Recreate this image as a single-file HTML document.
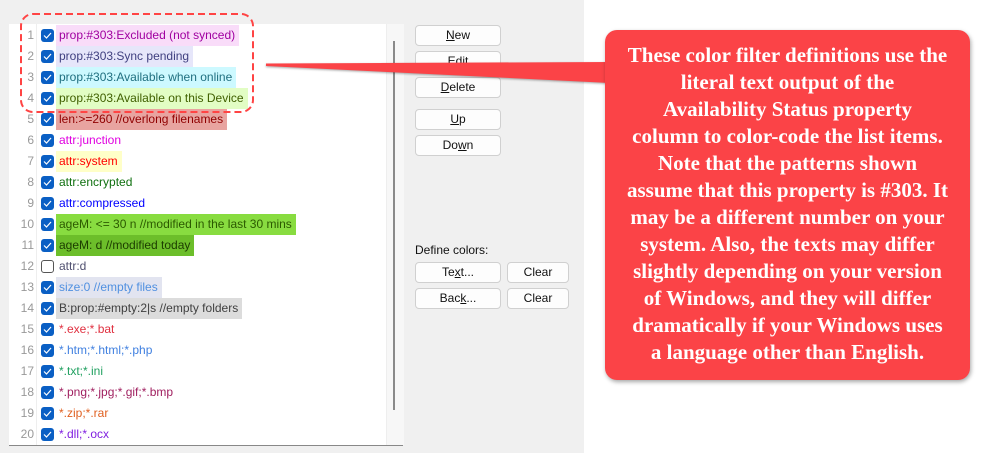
<!DOCTYPE html>
<html><head><meta charset="utf-8"><style>
body{margin:0;width:990px;height:453px;background:#fff;position:relative;overflow:hidden;font-family:"Liberation Sans",sans-serif}
.panel{position:absolute;left:0;top:0;width:584px;height:453px;background:#f0f0f0}
.list{position:absolute;left:9px;top:24px;width:394px;height:421px;background:#fff;border-bottom:1px solid #888}
.strip{position:absolute;left:386px;top:24px;width:17px;height:421px;background:#f7f7f7;border-left:1px solid #eee}
.thumb{position:absolute;left:393px;top:41px;width:2px;height:369px;background:#8a8a8a}
.sep{position:absolute;left:36px;top:24px;width:1px;height:421px;background:#eee}
.row{position:absolute;left:0;height:21px;width:380px}
.num{position:absolute;left:10px;width:24px;text-align:right;top:3px;font-size:12px;color:#999}
.cb{position:absolute;left:41px;top:4px;width:13px;height:13px;border-radius:3px;background:#0a5fc4}
.cb svg{position:absolute;left:2px;top:2px}
.cb.off{background:#fff;border:1px solid #555;width:11px;height:11px}
.t{position:absolute;left:56px;top:0;height:21px;line-height:21px;padding:0 4px 0 3px;font-size:12px;white-space:nowrap}
.btn{position:absolute;height:19px;background:#fdfdfd;border:1px solid #d0d0d0;border-radius:4px;font-size:12px;text-align:center;line-height:19px;color:#111}
.callout{position:absolute;left:605px;top:30px;width:365px;height:350px;background:#fb4347;border-radius:12px;box-shadow:1px 2px 4px rgba(0,0,0,.35);color:#fff;font-family:"Liberation Serif",serif;font-size:21px;font-weight:bold;line-height:27px;text-align:center;padding-top:12px;box-sizing:border-box;white-space:nowrap}
</style></head><body>
<div class="panel"></div>
<div class="list"></div>
<div class="strip"></div>
<div class="thumb"></div>
<div class="sep"></div>
<div style="position:absolute;left:0;top:0">
<div class="row" style="top:25px"><span class="num">1</span><span class="cb"><svg width="9" height="9"><path d="M1 4.5l2.5 2.5 4.5-5" stroke="#fff" stroke-width="1.2" fill="none"/></svg></span><span class="t" style="background:#f9dcf9;color:#a000a0">prop:#303:Excluded (not synced)</span></div>
<div class="row" style="top:46px"><span class="num">2</span><span class="cb"><svg width="9" height="9"><path d="M1 4.5l2.5 2.5 4.5-5" stroke="#fff" stroke-width="1.2" fill="none"/></svg></span><span class="t" style="background:#e6e6fa;color:#404080">prop:#303:Sync pending</span></div>
<div class="row" style="top:67px"><span class="num">3</span><span class="cb"><svg width="9" height="9"><path d="M1 4.5l2.5 2.5 4.5-5" stroke="#fff" stroke-width="1.2" fill="none"/></svg></span><span class="t" style="background:#cdf9ff;color:#207080">prop:#303:Available when online</span></div>
<div class="row" style="top:88px"><span class="num">4</span><span class="cb"><svg width="9" height="9"><path d="M1 4.5l2.5 2.5 4.5-5" stroke="#fff" stroke-width="1.2" fill="none"/></svg></span><span class="t" style="background:#e2fdc4;color:#406000">prop:#303:Available on this Device</span></div>
<div class="row" style="top:109px"><span class="num">5</span><span class="cb"><svg width="9" height="9"><path d="M1 4.5l2.5 2.5 4.5-5" stroke="#fff" stroke-width="1.2" fill="none"/></svg></span><span class="t" style="background:#e8a4a0;color:#900000">len:&gt;=260 //overlong filenames</span></div>
<div class="row" style="top:130px"><span class="num">6</span><span class="cb"><svg width="9" height="9"><path d="M1 4.5l2.5 2.5 4.5-5" stroke="#fff" stroke-width="1.2" fill="none"/></svg></span><span class="t" style="color:#e000e0">attr:junction</span></div>
<div class="row" style="top:151px"><span class="num">7</span><span class="cb"><svg width="9" height="9"><path d="M1 4.5l2.5 2.5 4.5-5" stroke="#fff" stroke-width="1.2" fill="none"/></svg></span><span class="t" style="background:#ffffc8;color:#ff0000">attr:system</span></div>
<div class="row" style="top:172px"><span class="num">8</span><span class="cb"><svg width="9" height="9"><path d="M1 4.5l2.5 2.5 4.5-5" stroke="#fff" stroke-width="1.2" fill="none"/></svg></span><span class="t" style="color:#107010">attr:encrypted</span></div>
<div class="row" style="top:193px"><span class="num">9</span><span class="cb"><svg width="9" height="9"><path d="M1 4.5l2.5 2.5 4.5-5" stroke="#fff" stroke-width="1.2" fill="none"/></svg></span><span class="t" style="color:#0000ff">attr:compressed</span></div>
<div class="row" style="top:214px"><span class="num">10</span><span class="cb"><svg width="9" height="9"><path d="M1 4.5l2.5 2.5 4.5-5" stroke="#fff" stroke-width="1.2" fill="none"/></svg></span><span class="t" style="background:#88dc40;color:#2c5a00">ageM: &lt;= 30 n //modified in the last 30 mins</span></div>
<div class="row" style="top:235px"><span class="num">11</span><span class="cb"><svg width="9" height="9"><path d="M1 4.5l2.5 2.5 4.5-5" stroke="#fff" stroke-width="1.2" fill="none"/></svg></span><span class="t" style="background:#6cbe2a;color:#1c3c00">ageM: d //modified today</span></div>
<div class="row" style="top:256px"><span class="num">12</span><span class="cb off"></span><span class="t" style="color:#505070">attr:d</span></div>
<div class="row" style="top:277px"><span class="num">13</span><span class="cb"><svg width="9" height="9"><path d="M1 4.5l2.5 2.5 4.5-5" stroke="#fff" stroke-width="1.2" fill="none"/></svg></span><span class="t" style="background:#e2e4f0;color:#5090e0">size:0 //empty files</span></div>
<div class="row" style="top:298px"><span class="num">14</span><span class="cb"><svg width="9" height="9"><path d="M1 4.5l2.5 2.5 4.5-5" stroke="#fff" stroke-width="1.2" fill="none"/></svg></span><span class="t" style="background:#dcdcdc;color:#404040">B:prop:#empty:2|s //empty folders</span></div>
<div class="row" style="top:319px"><span class="num">15</span><span class="cb"><svg width="9" height="9"><path d="M1 4.5l2.5 2.5 4.5-5" stroke="#fff" stroke-width="1.2" fill="none"/></svg></span><span class="t" style="color:#e03040">*.exe;*.bat</span></div>
<div class="row" style="top:340px"><span class="num">16</span><span class="cb"><svg width="9" height="9"><path d="M1 4.5l2.5 2.5 4.5-5" stroke="#fff" stroke-width="1.2" fill="none"/></svg></span><span class="t" style="color:#4080e0">*.htm;*.html;*.php</span></div>
<div class="row" style="top:361px"><span class="num">17</span><span class="cb"><svg width="9" height="9"><path d="M1 4.5l2.5 2.5 4.5-5" stroke="#fff" stroke-width="1.2" fill="none"/></svg></span><span class="t" style="color:#20a060">*.txt;*.ini</span></div>
<div class="row" style="top:382px"><span class="num">18</span><span class="cb"><svg width="9" height="9"><path d="M1 4.5l2.5 2.5 4.5-5" stroke="#fff" stroke-width="1.2" fill="none"/></svg></span><span class="t" style="color:#a02060">*.png;*.jpg;*.gif;*.bmp</span></div>
<div class="row" style="top:403px"><span class="num">19</span><span class="cb"><svg width="9" height="9"><path d="M1 4.5l2.5 2.5 4.5-5" stroke="#fff" stroke-width="1.2" fill="none"/></svg></span><span class="t" style="color:#e06020">*.zip;*.rar</span></div>
<div class="row" style="top:424px"><span class="num">20</span><span class="cb"><svg width="9" height="9"><path d="M1 4.5l2.5 2.5 4.5-5" stroke="#fff" stroke-width="1.2" fill="none"/></svg></span><span class="t" style="color:#8020e0">*.dll;*.ocx</span></div>
</div>
<div class="btn" style="left:415px;top:25px;width:84px"><u>N</u>ew</div>
<div class="btn" style="left:415px;top:51px;width:84px">Edit</div>
<div class="btn" style="left:415px;top:77px;width:84px"><u>D</u>elete</div>
<div class="btn" style="left:415px;top:109px;width:84px"><u>U</u>p</div>
<div class="btn" style="left:415px;top:135px;width:84px">Do<u>w</u>n</div>
<div style="position:absolute;left:415px;top:243px;font-size:12px;color:#111">Define colors:</div>
<div class="btn" style="left:415px;top:262px;width:84px">Te<u>x</u>t...</div>
<div class="btn" style="left:507px;top:262px;width:60px">Clear</div>
<div class="btn" style="left:415px;top:288px;width:84px">Bac<u>k</u>...</div>
<div class="btn" style="left:507px;top:288px;width:60px">Clear</div>
<svg style="position:absolute;left:0;top:0" width="990" height="453">
<rect x="21" y="14" width="232" height="98" rx="12" fill="none" stroke="#f44" stroke-width="2" stroke-dasharray="7,4"/>
<polygon points="266,63.5 266,66 610,83 610,62" fill="#fb4347" style="filter:drop-shadow(0 1px 1px rgba(0,0,0,.35))"/>
</svg>
<div class="callout">These color filter definitions use the<br>literal text output of the<br>Availability Status property<br>column to color-code the list items.<br>Note that the patterns shown<br>assume that this property is #303. It<br>may be a different number on your<br>system. Also, the texts may differ<br>slightly depending on your version<br>of Windows, and they will differ<br>dramatically if your Windows uses<br>a language other than English.</div>
</body></html>
